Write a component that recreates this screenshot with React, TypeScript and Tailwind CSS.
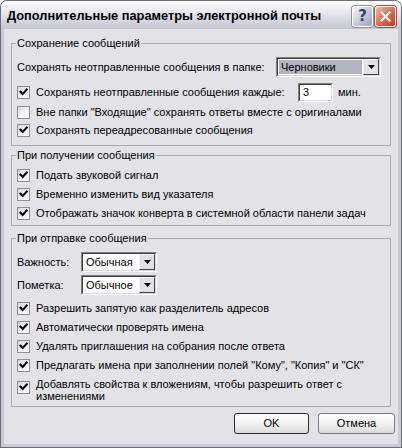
import React from "react";

const font = { fontFamily: '"Liberation Sans", Arial, sans-serif' };

function Check({ checked }: { checked: boolean }) {
  return (
    <span className="w-[13px] h-[13px] shrink-0 border border-[#8e8f99] bg-gradient-to-br from-[#d6d6da] via-[#f4f4f4] to-white flex items-center justify-center">
      {checked && (
        <svg width="9" height="9" viewBox="0 0 9 9">
          <path d="M1.5 3.8 L3.6 6 L7.8 1.6" stroke="#000" strokeWidth="2.1" fill="none" strokeLinecap="square" />
        </svg>
      )}
    </span>
  );
}

function CheckRow({ checked, label, h = "h-[19px]" }: { checked: boolean; label: string; h?: string }) {
  return (
    <div className={`flex items-center gap-[6px] ${h}`}>
      <Check checked={checked} />
      <span className="whitespace-nowrap">{label}</span>
    </div>
  );
}

function Arrow() {
  return (
    <div className="w-[16px] h-full shrink-0 border border-t-[#f4f4f6] border-l-[#f4f4f6] border-b-[#404044] border-r-[#404044] bg-[#e2e2e6] flex items-center justify-center">
      <svg width="7" height="4" viewBox="0 0 7 4">
        <path d="M0 0 H7 L3.5 4 Z" fill="#000" />
      </svg>
    </div>
  );
}

function Combo({ value, w, selected }: { value: string; w: string; selected?: boolean }) {
  return (
    <div className={`${w} h-[20px] border border-t-[#808084] border-l-[#808084] border-b-white border-r-white flex`}>
      <div className="flex-1 flex border border-t-[#404044] border-l-[#404044] border-b-[#d8d8dc] border-r-[#d8d8dc] bg-white">
        <div className="flex-1 flex items-center p-[1px]">
          <div className={`h-full flex-1 flex items-center pl-[2px] ${selected ? "bg-[#b2b4bf]" : ""}`}>
            {value}
          </div>
        </div>
        <Arrow />
      </div>
    </div>
  );
}

function Group({ title, children, className }: { title: string; children: React.ReactNode; className?: string }) {
  return (
    <fieldset className={`border border-[#a8a8b0] px-[5px] ${className ?? ""}`}>
      <legend className="ml-[-1px] px-[1px] leading-[14px]">{title}</legend>
      {children}
    </fieldset>
  );
}

export default function App() {
  return (
    <div className="w-[402px] h-[448px] bg-[#6e6e78] p-px rounded-t-[7px] flex flex-col text-[11px] text-black" style={font}>
      <div className="flex-1 flex flex-col rounded-t-[6px] bg-[#c9c9d3]">
        {/* title bar */}
        <div className="h-[28px] shrink-0 rounded-t-[6px] bg-gradient-to-b from-[#ffffff] via-[#e2e2e8] to-[#c4c4ce] flex items-center pl-[6px] pr-[5px]">
          <div className="flex-1 font-bold text-[12.8px] whitespace-nowrap mt-[2px]">
            Дополнительные параметры электронной почты
          </div>
          <div className="flex gap-[2px] mt-[2px]">
            <div className="w-[21px] h-[21px] rounded-[3px] border border-white bg-gradient-to-br from-[#f2f3f9] via-[#c9cce0] to-[#9aa0bc] flex items-center justify-center shadow-[0_0_0_1px_#8f93ab]">
              <span className="text-[15px] font-bold text-[#3c3f58] leading-none" style={{ fontFamily: '"DejaVu Sans", sans-serif' }}>?</span>
            </div>
            <div className="w-[21px] h-[21px] rounded-[3px] border border-white bg-gradient-to-br from-[#f3b5a5] via-[#e36a50] to-[#c4391f] flex items-center justify-center shadow-[0_0_0_1px_#a45040]">
              <svg width="11" height="11" viewBox="0 0 11 11">
                <path d="M1.5 1.5 L9.5 9.5 M9.5 1.5 L1.5 9.5" stroke="#fff" strokeWidth="2.2" strokeLinecap="square" />
              </svg>
            </div>
          </div>
        </div>

        {/* client area */}
        <div className="flex-1 mx-[3px] mb-[3px] bg-[#e3e3e7] px-[7px] flex flex-col">
          <Group title="Сохранение сообщений" className="mt-[7px] pb-[6px]">
            <div className="flex items-center h-[20px] mt-[7px]">
              <span className="w-[259px] whitespace-nowrap">Сохранять неотправленные сообщения в папке:</span>
              <Combo value="Черновики" w="w-[105px]" selected />
            </div>
            <div className="flex items-center h-[20px] mt-[5px]">
              <div className="flex items-center gap-[6px] w-[281px]">
                <Check checked />
                <span className="whitespace-nowrap">Сохранять неотправленные сообщения каждые:</span>
              </div>
              <div className="w-[35px] h-[19px] border border-t-[#808084] border-l-[#808084] border-b-white border-r-white flex">
                <div className="flex-1 border border-t-[#404044] border-l-[#404044] border-b-[#d8d8dc] border-r-[#d8d8dc] bg-white flex items-center pl-[3px]">
                  3
                </div>
              </div>
              <span className="ml-[5px]">мин.</span>
            </div>
            <CheckRow checked={false} label={'Вне папки "Входящие" сохранять ответы вместе с оригиналами'} h="h-[18px] mt-[1px]" />
            <CheckRow checked label="Сохранять переадресованные сообщения" h="h-[18px]" />
          </Group>

          <Group title="При получении сообщения" className="mt-[2px] pb-[2px]">
            <div className="mt-[4px] flex flex-col">
              <CheckRow checked label="Подать звуковой сигнал" />
              <CheckRow checked label="Временно изменить вид указателя" />
              <CheckRow checked label="Отображать значок конверта в системной области панели задач" />
            </div>
          </Group>

          <Group title="При отправке сообщения" className="mt-[5px] pb-[4px]">
            <div className="flex items-center h-[20px] mt-[7px]">
              <span className="w-[64px]">Важность:</span>
              <Combo value="Обычная" w="w-[76px]" />
            </div>
            <div className="flex items-center h-[20px] mt-[3px]">
              <span className="w-[64px]">Пометка:</span>
              <Combo value="Обычное" w="w-[76px]" />
            </div>
            <div className="flex flex-col mt-[4px]">
              <CheckRow checked label="Разрешить запятую как разделитель адресов" />
              <CheckRow checked label="Автоматически проверять имена" />
              <CheckRow checked label="Удалять приглашения на собрания после ответа" />
              <CheckRow checked label={'Предлагать имена при заполнении полей "Кому", "Копия" и "СК"'} />
              <div className="flex items-start gap-[6px] mt-[3px]">
                <div className="mt-[3px]">
                  <Check checked />
                </div>
                <span className="leading-[12px]">
                  Добавлять свойства к вложениям, чтобы разрешить ответ с
                  <br />
                  изменениями
                </span>
              </div>
            </div>
          </Group>

          <div className="flex justify-end gap-[9px] mt-[6px] -mr-[4px]">
            <button className="w-[75px] h-[21px] rounded-[3px] border border-[#2a2a30] bg-gradient-to-b from-white via-[#f2f2f2] to-[#dadade] flex items-center justify-center">
              OK
            </button>
            <button className="w-[77px] h-[21px] rounded-[3px] border border-[#7c7c84] bg-gradient-to-b from-white via-[#f2f2f2] to-[#dadade] flex items-center justify-center">
              Отмена
            </button>
          </div>
        </div>
      </div>
    </div>
  );
}
